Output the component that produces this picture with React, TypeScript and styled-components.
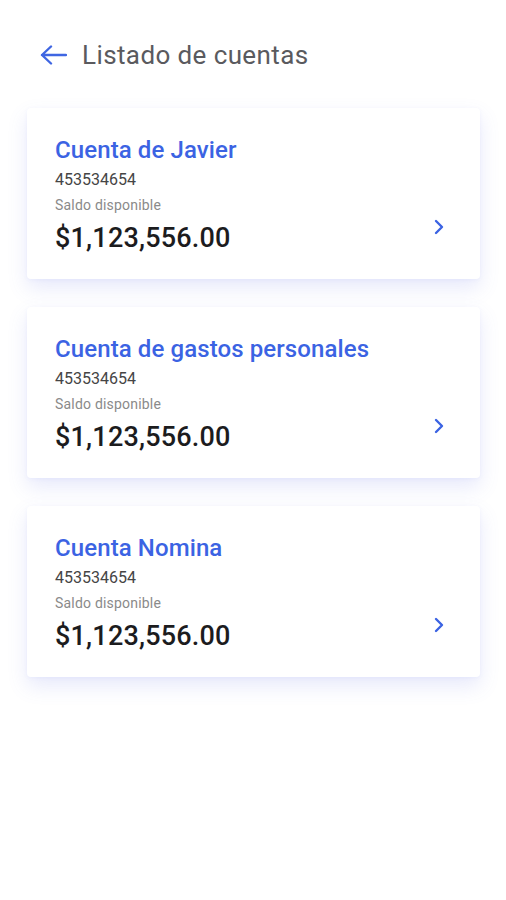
import React from 'react';
import styled, { createGlobalStyle } from 'styled-components';

const GlobalStyle = createGlobalStyle`
  body {
    margin: 0;
    background: #ffffff;
    font-family: Roboto, 'Liberation Sans', sans-serif;
  }
`;

const Page = styled.div`
  display: flex;
  flex-direction: column;
  padding: 36px 26px 40px 27px;
`;

const Header = styled.div`
  display: flex;
  align-items: center;
  gap: 15px;
  padding-left: 13px;
  height: 38px;
  margin-bottom: 34px;
`;

const BackButton = styled.button`
  display: flex;
  align-items: center;
  justify-content: center;
  padding: 0;
  border: none;
  background: none;
  color: #3f66e2;
  cursor: pointer;
`;

const Title = styled.h1`
  margin: 0;
  font-size: 26px;
  font-weight: 400;
  color: #5a5a5e;
  letter-spacing: 0.4px;
`;

const List = styled.div`
  display: flex;
  flex-direction: column;
  gap: 28px;
`;

const Card = styled.div`
  display: flex;
  align-items: flex-start;
  justify-content: space-between;
  height: 171px;
  box-sizing: border-box;
  padding: 27px 36px 20px 28px;
  background: #ffffff;
  border-radius: 4px;
  box-shadow: 0 9px 20px rgba(92, 110, 230, 0.15), 0 1px 4px rgba(92, 110, 230, 0.06);
`;

const Info = styled.div`
  display: flex;
  flex-direction: column;
`;

const AccountName = styled.div`
  font-size: 24px;
  font-weight: 500;
  color: #3b63e3;
  line-height: 30px;
  letter-spacing: 0.1px;
`;

const AccountNumber = styled.div`
  font-size: 16px;
  color: #454545;
  line-height: 22px;
  margin-top: 4px;
`;

const BalanceLabel = styled.div`
  font-size: 14px;
  color: #8a8a8a;
  line-height: 20px;
  margin-top: 4px;
  letter-spacing: 0.2px;
`;

const Balance = styled.div`
  font-size: 27px;
  font-weight: 500;
  color: #1c1c1e;
  line-height: 32px;
  margin-top: 7px;
  letter-spacing: 0.2px;
`;

const Chevron = styled.div`
  display: flex;
  align-self: flex-end;
  color: #3b63e3;
  margin-bottom: 24px;
`;

const accounts = [
  { name: 'Cuenta de Javier', number: '453534654', balance: '$1,123,556.00' },
  { name: 'Cuenta de gastos personales', number: '453534654', balance: '$1,123,556.00' },
  { name: 'Cuenta Nomina', number: '453534654', balance: '$1,123,556.00' },
];

export default function App() {
  return (
    <>
      <GlobalStyle />
      <Page>
        <Header>
          <BackButton aria-label="Regresar">
            <svg width="27" height="20" viewBox="0 0 27 20" fill="none">
              <path d="M26 10H2M11 1.5L2 10l9 8.5" stroke="currentColor" strokeWidth="2.4" strokeLinecap="round" strokeLinejoin="round" />
            </svg>
          </BackButton>
          <Title>Listado de cuentas</Title>
        </Header>
        <List>
          {accounts.map((a) => (
            <Card key={a.name}>
              <Info>
                <AccountName>{a.name}</AccountName>
                <AccountNumber>{a.number}</AccountNumber>
                <BalanceLabel>Saldo disponible</BalanceLabel>
                <Balance>{a.balance}</Balance>
              </Info>
              <Chevron>
                <svg width="10" height="16" viewBox="0 0 10 16" fill="none">
                  <path d="M2 2l6 6-6 6" stroke="currentColor" strokeWidth="2.4" strokeLinecap="round" strokeLinejoin="round" />
                </svg>
              </Chevron>
            </Card>
          ))}
        </List>
      </Page>
    </>
  );
}
